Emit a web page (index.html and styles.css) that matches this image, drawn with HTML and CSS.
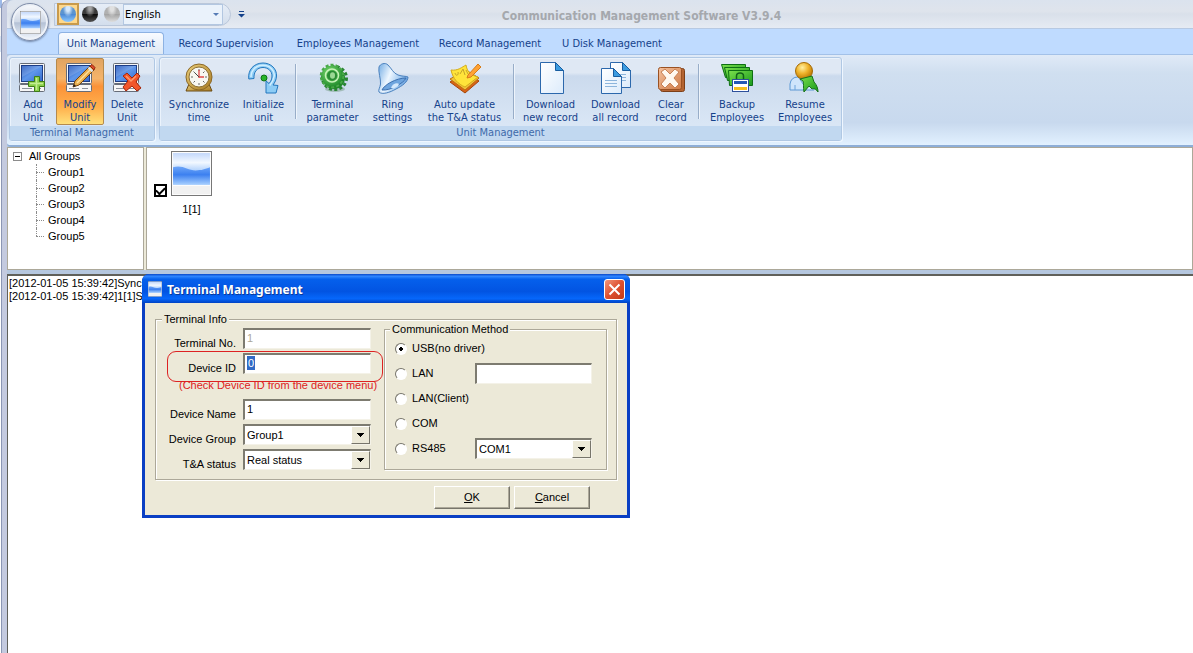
FILE: index.html
```html
<!DOCTYPE html>
<html lang="en">
<head>
<meta charset="utf-8">
<title>Communication Management Software V3.9.4</title>
<link rel="stylesheet" href="styles.css">
</head>
<body>
<svg width="0" height="0" class="defs" aria-hidden="true">
  <defs>
    <linearGradient id="sky" x1="0" y1="0" x2="0" y2="1"><stop offset="0" stop-color="#c3d8fb"/><stop offset=".3" stop-color="#f2f8ff"/><stop offset=".6" stop-color="#a8ccfc"/></linearGradient>
    <linearGradient id="sea" x1="0" y1="0" x2="0" y2="1"><stop offset="0" stop-color="#6ea6f8"/><stop offset=".45" stop-color="#3c80f0"/><stop offset="1" stop-color="#a8d0ff"/></linearGradient>
    <linearGradient id="screen" x1="0" y1="0" x2="1" y2="1"><stop offset="0" stop-color="#1c4fb8"/><stop offset=".5" stop-color="#5f97ea"/><stop offset="1" stop-color="#3268cc"/></linearGradient>
    <linearGradient id="gold" x1="0" y1="0" x2="1" y2="1"><stop offset="0" stop-color="#ecd07c"/><stop offset="1" stop-color="#a87a22"/></linearGradient>
    <linearGradient id="paper" x1="0" y1="0" x2="1" y2="1"><stop offset="0" stop-color="#ffffff"/><stop offset="1" stop-color="#dcebfb"/></linearGradient>
    <linearGradient id="bell" x1="0" y1=".3" x2="1" y2=".7"><stop offset="0" stop-color="#8fbdea"/><stop offset=".35" stop-color="#eef7ff"/><stop offset=".7" stop-color="#9cc6f0"/><stop offset="1" stop-color="#5a94d6"/></linearGradient>
    <linearGradient id="green" x1="0" y1="0" x2="1" y2="1"><stop offset="0" stop-color="#7be04c"/><stop offset="1" stop-color="#189a1c"/></linearGradient>
    <radialGradient id="gear" cx=".4" cy=".35" r=".7"><stop offset="0" stop-color="#7bdc70"/><stop offset="1" stop-color="#1f8a2a"/></radialGradient>
    <radialGradient id="head" cx=".4" cy=".3" r=".7"><stop offset="0" stop-color="#fff0a0"/><stop offset=".5" stop-color="#f0b42c"/><stop offset="1" stop-color="#b87400"/></radialGradient>
    <linearGradient id="copper" x1="0" y1="0" x2="1" y2="1"><stop offset="0" stop-color="#f4c09c"/><stop offset="1" stop-color="#d07c48"/></linearGradient>
    <symbol id="logo" viewBox="0 0 40 44">
      <rect x=".5" y=".5" width="39" height="43" fill="#fff" stroke="#777"/>
      <rect x="2" y="2" width="36" height="31" fill="url(#sky)"/>
      <path d="M2 16c9-3 14 3 22 3 6 0 9-1 14-3v17H2z" fill="url(#sea)"/>
      <rect x="2" y="34" width="36" height="8" fill="#f1f1f1"/>
    </symbol>
    <symbol id="pc" viewBox="0 0 32 32">
      <rect x="2.500" y="1.500" width="25" height="20" rx="1" fill="#f6f6f6" stroke="#666c77"/>
      <rect x="4.500" y="3.500" width="21" height="16" fill="url(#screen)" stroke="#1c3d86"/>
      <path d="M5 4h20L5 15z" fill="#fff" opacity=".16"/>
      <rect x="2.500" y="22.500" width="25" height="7" rx="1" fill="#f6f6f6" stroke="#666c77"/>
      <path d="M5 26.500h10M18 26.500h6" stroke="#8b919b"/>
    </symbol>
    <symbol id="doc" viewBox="0 0 24 32">
      <path d="M.5.5h15l8 8v23H.5z" fill="url(#paper)" stroke="#2c68ac"/>
      <path d="M15.500.5v8h8z" fill="#3b9be0" stroke="#175c9f"/>
    </symbol>
    <symbol id="sheet" viewBox="0 0 21 26">
      <path d="M.5.5h12l8 8v17H.5z" fill="url(#paper)" stroke="#2c68ac"/>
      <path d="M12.500.5v8h8z" fill="#3b9be0" stroke="#175c9f"/>
      <path d="M4 12.500h12M4 15.500h12M4 18.500h12" stroke="#8db5dc"/>
    </symbol>
  </defs>
</svg>

<div class="desktop-edge"></div>
<div class="window">
  <button class="app-button" type="button" aria-label="Application menu"><svg width="21" height="23"><use href="#logo"/></svg></button>

  <header class="titlebar">
    <div class="quick">
      <button class="orb-button orb-active" type="button" aria-label="Blue theme"><span class="orb orb-blue"></span></button>
      <button class="orb-button" type="button" aria-label="Black theme"><span class="orb orb-black"></span></button>
      <button class="orb-button" type="button" aria-label="Silver theme"><span class="orb orb-silver"></span></button>
      <span class="lang"><select aria-label="Language"><option>English</option></select></span>
    </div>
    <button class="quick-more" type="button" aria-label="More commands"><svg width="7" height="7" viewBox="0 0 7 7"><path d="M1 0h5v1H1zM0 3h7L3.500 6.500z" fill="#15428b"/></svg></button>
    <h1 class="app-title">Communication Management Software V3.9.4</h1>
  </header>

  <nav class="tabs">
    <button class="tab tab-active" type="button">Unit Management</button>
    <button class="tab" type="button">Record Supervision</button>
    <button class="tab tab-wide" type="button">Employees Management</button>
    <button class="tab" type="button">Record Management</button>
    <button class="tab" type="button">U Disk Management</button>
  </nav>

  <div class="ribbon">
    <section class="group">
      <div class="tools tools-units">
        <button class="tool w-s" type="button">
          <svg width="32" height="32" viewBox="0 0 32 32"><use href="#pc"/><path d="M17.500 14.500h5v5h5v5h-5v5h-5v-5h-6v-5h6z" fill="#8bcf4a" stroke="#3d7d16"/><path d="M19.500 16v12M13 21.500h13" stroke="#c3ee92" stroke-width="1.500"/></svg>
          Add<br>Unit</button>
        <button class="tool tool-active w-s" type="button">
          <svg width="32" height="32" viewBox="0 0 32 32"><use href="#pc"/><path d="M9 25l2-6L26 4l4 4-15 15z" fill="#e8b050" stroke="#75420c"/><path d="M13 21L27 7" stroke="#ffe09a" stroke-width="1.500"/><path d="M26 4l2-1.500 3 3L30 8z" fill="#e04a28" stroke="#8f2710"/><path d="M24.500 5.500l4 4" stroke="#dfe5ee" stroke-width="2"/><path d="M9 25l1-3 2 2z" fill="#222"/></svg>
          Modify<br>Unit</button>
        <button class="tool w-s" type="button">
          <svg width="32" height="32" viewBox="0 0 32 32"><use href="#pc"/><path d="M12 14l4-3 5 5 5-5 3 3-4 6 5 6-4 3-5-5-6 5-3-4 5-6z" fill="#f1562b" stroke="#a5250a"/><path d="M15 14l5 5 5-5" fill="none" stroke="#ff9a6c" stroke-width="1.500"/></svg>
          Delete<br>Unit</button>
      </div>
      <h2 class="group-name">Terminal Managment</h2>
    </section>

    <section class="group">
      <div class="tools">
        <button class="tool w-xl" type="button">
          <svg width="32" height="32" viewBox="0 0 32 32"><path d="M3 29l3-7h20l3 7z" fill="url(#gold)" stroke="#6b4b12"/><circle cx="16" cy="15" r="13" fill="url(#gold)" stroke="#8c6826"/><circle cx="16" cy="15" r="10" fill="#f8f7f2" stroke="#8d7238"/><path d="M16 7v2M16 21v2M8 15h2M22 15h2M10.500 9.500l1.500 1.500M21.500 9.500L20 11M10.500 20.500L12 19M21.500 20.500L20 19" stroke="#666"/><path d="M16 8v8M16 15h5" fill="none" stroke="#e04a4a" stroke-width="1.300"/><path d="M16 15l-4-4" stroke="#444"/></svg>
          Synchronize<br>time</button>
        <button class="tool w-m" type="button">
          <svg width="32" height="32" viewBox="0 0 32 32"><path d="M.8 17C-.5 8 6 1 15 1c8 0 14 6 13.500 13-.2 4-1.500 6-3.500 9l5 .5L28 31H18V19l3 2.500c2-2.500 3-4.500 3-7.500 0-5-4-8.500-9-8.500-6 0-9.500 4.500-9 11z" fill="#8dccf5" stroke="#2377bd"/><path d="M3 15C3 8 8 3.200 15 3.200S27 9 26.200 14s-2.500 7-4.500 9.500" fill="none" stroke="#d2efff" stroke-width="1.500"/><circle cx="16" cy="16" r="3" fill="#29b529" stroke="#0f7216"/></svg>
          Initialize<br>unit</button>
        <span class="divider"></span>
        <button class="tool w-l" type="button">
          <svg width="32" height="32" viewBox="0 0 32 32"><ellipse cx="18" cy="27" rx="10" ry="3" fill="#5c8a66" opacity=".4"/><ellipse cx="17.500" cy="16" rx="12" ry="11.500" fill="none" stroke="#2a8434" stroke-width="3" stroke-dasharray="3 2.200"/><circle cx="17" cy="16" r="11" fill="#22882a"/><circle cx="15" cy="14" r="11" fill="none" stroke="#49a848" stroke-width="2.500" stroke-dasharray="3 2"/><circle cx="15" cy="14" r="10.500" fill="url(#gear)"/><circle cx="15" cy="13.500" r="6.500" fill="none" stroke="#c6f2b8" stroke-width="1.500"/><circle cx="15" cy="13.500" r="5" fill="#2a8c34"/><ellipse cx="15.500" cy="13.500" rx="2.500" ry="3.200" fill="#9bd894"/></svg>
          Terminal<br>parameter</button>
        <button class="tool w-m" type="button">
          <svg width="32" height="32" viewBox="0 0 32 32"><path d="M2 30c-1-2 1-4 1.500-8C4 17 1 10 2 5c1-3 6-5 9-2 4 4 5 8 10 10 4 1.500 8 1 10 2 0 5-6 9-12 12-6 3.500-14 6-17 3z" fill="url(#bell)" stroke="#4a80bd"/><path d="M5 28c2-5 14-12 24-12-2 5-16 13-24 12z" fill="#6fa5de" stroke="#3a6fb0"/><path d="M14 26c1-4 6-6 8-4-1 3-5 5-8 4z" fill="#d5e9fc"/></svg>
          Ring<br>settings</button>
        <button class="tool w-xxl" type="button">
          <svg width="32" height="32" viewBox="0 0 32 32"><path d="M1 20l15 11 14-12-13-9z" fill="#d86318" stroke="#a54708"/><path d="M1 17l15 11 14-12-13-8z" fill="#f1c23a" stroke="#be720d"/><path d="M2 8c7 1 11-3 15-5 1 6 4 10 12 12L16 25C9 22 4 17 2 8z" fill="#ffe43a" stroke="#d4ac1c"/><path d="M6 11c1 4 4 2 3-1M11 12l3-5 2 6M17 8l2 4" fill="none" stroke="#c6a42a"/><path d="M19 13L29 2l3 3-10 10-4 1z" fill="#ffa234" stroke="#d77c17"/></svg>
          Auto update<br>the T&amp;A status</button>
        <span class="divider"></span>
        <button class="tool w-l" type="button">
          <svg width="32" height="32" viewBox="0 0 32 32"><use href="#doc" x="5" y="0" width="24" height="32"/></svg>
          Download<br>new record</button>
        <button class="tool w-l" type="button">
          <svg width="32" height="32" viewBox="0 0 32 32"><use href="#sheet" x="10" y="0" width="21" height="26"/><use href="#sheet" x="1" y="6" width="21" height="26"/></svg>
          Download<br>all record</button>
        <button class="tool w-s" type="button">
          <svg width="32" height="32" viewBox="0 0 32 32"><rect x="5.500" y="6.500" width="24" height="23" rx="2" fill="#b46432" stroke="#7d3f18"/><rect x="3.500" y="5.500" width="23" height="22" rx="2" fill="url(#copper)" stroke="#9a5122"/><path d="M6 10l4-3 5 5 5-5 4 3-5 6 5 6-4 4-5-5-5 5-4-4 5-6z" fill="#fff8ef" stroke="#c78155"/></svg>
          Clear<br>record</button>
        <span class="divider"></span>
        <button class="tool w-lx" type="button">
          <svg width="34" height="32" viewBox="0 0 34 32"><path d="M1.500 2.500h24v13h-20z" fill="url(#green)" stroke="#0d6e13"/><path d="M4.500 5.500h25v13h-22z" fill="url(#green)" stroke="#0d6e13"/><path d="M8.500 8.500h24v15h-23z" fill="url(#green)" stroke="#0d6e13"/><path d="M16.500 17v-3c0-4 7-4 7 0v3" fill="none" stroke="#116418" stroke-width="1.500"/><rect x="12.500" y="17.500" width="16" height="12" fill="#fff" stroke="#2d4f9b"/><path d="M14 19h13v3H14z" fill="#2458b5"/><path d="M14 25h13v3H14z" fill="#f4be20"/></svg>
          Backup<br>Employees</button>
        <button class="tool w-lx" type="button">
          <svg width="32" height="32" viewBox="0 0 32 32"><path d="M1 28V22q1-7 8-7h8q7 1 8 9v4z" fill="#cfe5fb" stroke="#5c98d4"/><path d="M6 28v-5M10 16l4 6 4-6" fill="none" stroke="#6ca4dc"/><circle cx="15" cy="9" r="8.500" fill="url(#head)" stroke="#a36a07"/><path d="M11 17l12-3 2 6c3 3 4 7 4 10-2-3-4-4-6-3l-3-3-5 6c-1-5 0-8-1-11z" fill="url(#green)" stroke="#18701a"/></svg>
          Resume<br>Employees</button>
      </div>
      <h2 class="group-name">Unit Management</h2>
    </section>
  </div>

  <main class="panes">
    <aside class="tree">
      <div class="tree-root"><button class="toggle" type="button" aria-label="Collapse"></button>All Groups</div>
      <ul>
        <li>Group1</li><li>Group2</li><li>Group3</li><li>Group4</li><li>Group5</li>
      </ul>
    </aside>
    <section class="devices">
      <label class="device">
        <input type="checkbox" checked>
        <span class="device-body"><svg width="41" height="45" viewBox="0 0 40 44" preserveAspectRatio="none"><use href="#logo"/></svg><span>1[1]</span></span>
      </label>
    </section>
  </main>

  <section class="log">
    <p>[2012-01-05 15:39:42]Synchronize</p>
    <p>[2012-01-05 15:39:42]1[1]Synchronize</p>
  </section>

  <div class="dialog" role="dialog" aria-labelledby="dialog-title">
    <div class="dialog-title">
      <svg width="14" height="16"><use href="#logo"/></svg>
      <h2 id="dialog-title">Terminal Management</h2>
      <button class="close" type="button" aria-label="Close"><svg width="13" height="13" viewBox="0 0 13 13"><path d="M1.500 1.500l10 10M11.500 1.500l-10 10" stroke="#fff" stroke-width="2"/></svg></button>
    </div>
    <form class="dialog-body">
      <fieldset class="info">
        <legend>Terminal Info</legend>
        <div class="columns">
          <div class="fields">
            <div class="field"><label for="no">Terminal No.</label><input id="no" type="text" value="1" disabled></div>
            <div class="field field-marked"><label for="dev">Device ID</label><span class="sunken"><input id="dev" type="text" value="0" size="1"></span></div>
            <p class="note">(Check Device ID from the device menu)</p>
            <div class="field"><label for="name">Device Name</label><input id="name" type="text" value="1"></div>
            <div class="field"><label for="grp">Device Group</label><span class="combo"><select id="grp"><option>Group1</option></select></span></div>
            <div class="field"><label for="sta">T&amp;A status</label><span class="combo"><select id="sta"><option>Real status</option></select></span></div>
          </div>
          <fieldset class="method">
            <legend>Communication Method</legend>
            <div class="choice"><label><input type="radio" name="m" checked>USB(no driver)</label></div>
            <div class="choice"><label><input type="radio" name="m">LAN</label><input type="text" aria-label="LAN address"></div>
            <div class="choice"><label><input type="radio" name="m">LAN(Client)</label></div>
            <div class="choice"><label><input type="radio" name="m">COM</label></div>
            <div class="choice"><label><input type="radio" name="m">RS485</label><span class="combo"><select aria-label="RS485 port"><option>COM1</option></select></span></div>
          </fieldset>
        </div>
      </fieldset>
      <div class="actions">
        <button class="push" type="button"><u>O</u>K</button>
        <button class="push" type="button"><u>C</u>ancel</button>
      </div>
    </form>
  </div>
</div>
</body>
</html>
```

FILE: styles.css
```css
* { box-sizing: border-box; }
body {
  margin: 0;
  min-height: 100vh;
  display: flex;
  overflow: hidden;
  font: 11px/13px "Liberation Sans", Arial, sans-serif;
  color: #000;
  background: #fff;
}
button, input, select { font: inherit; color: inherit; }
button { padding: 0; border: 0; background: none; }
h1, h2, p, ul { margin: 0; padding: 0; }
.defs { position: absolute; }

.desktop-edge {
  width: 2px;
  background: linear-gradient(#9db9e8 0 8px, #f4f4f4 8px 36px, #d8e4f4 36px 52px, #fff 52px);
}
.window {
  position: relative;
  flex: 1;
  min-width: 0;
  display: flex;
  flex-direction: column;
  border-left: 5px solid #c4cadf;
  border-top-left-radius: 8px;
  box-shadow: -1px 0 #8b96b4;
  background: #b5c7df;
}

/* Title bar */
.titlebar {
  display: flex;
  align-items: center;
  height: 29px;
  padding-left: 47px;
  background: linear-gradient(#dbe3ee, #dfe4ec 40%, #d9e0ea 50%, #e6ebf3);
  border-bottom: 1px solid #b7c9e2;
  border-top-left-radius: 6px;
}
.quick {
  display: flex;
  align-items: center;
  width: 177px;
  height: 23px;
  padding-left: 2px;
  background: linear-gradient(#e6edf7, #d3deec);
  border: 1px solid #bac7da;
  border-radius: 0 12px 12px 0;
}
.orb-button { display: grid; place-items: center; width: 22px; height: 22px; border: 1px solid transparent; }
.orb-active { border: 2px solid #c89a4c; background: #ffd88a; }
.orb { width: 16px; height: 16px; border-radius: 50%; }
.orb-blue { background: radial-gradient(ellipse at 50% 15%, #d4e8fc 0 15%, transparent 45%), linear-gradient(#5c94d0 50%, #4886d4 50%, #8fcaff); }
.orb-black { background: radial-gradient(ellipse at 50% 15%, #a4a4a4 0 10%, transparent 45%), linear-gradient(#3a3a3a 50%, #080808 50%, #555); }
.orb-silver { background: radial-gradient(ellipse at 50% 15%, #e0e0e0 0 15%, transparent 45%), linear-gradient(#b0b0b0 50%, #a0a0a0 50%, #dedede); }
.lang { display: grid; align-items: center; width: 100px; height: 21px; }
.lang::after {
  content: "";
  grid-area: 1 / 1;
  justify-self: end;
  margin-right: 4px;
  border: 3px solid transparent;
  border-top-color: #557bb5;
  border-bottom: 0;
  pointer-events: none;
}
.lang select {
  grid-area: 1 / 1;
  appearance: none;
  width: 100%;
  height: 21px;
  padding: 0 1px;
  border: 1px solid #b3c7e1;
  border-radius: 0;
  background: #eaf2fb;
  font-family: "DejaVu Sans Condensed", Tahoma, sans-serif;
}
.quick-more { width: 20px; display: grid; place-items: center; }
.app-title {
  flex: 1;
  padding: 3px 161px 0 0;
  text-align: center;
  white-space: nowrap;
  font: bold 12px/16px "DejaVu Sans Condensed", "Trebuchet MS", sans-serif;
  color: #a5a8ad;
}
.app-button {
  position: absolute;
  z-index: 2;
  left: 4px;
  top: 3px;
  width: 38px;
  height: 38px;
  display: grid;
  place-items: center;
  border-radius: 50%;
  border: 1px solid #7e8ca8;
  background: linear-gradient(#fbfcfe, #cfd8e6 50%, #b4c1d5 52%, #f2f7fd);
  box-shadow: inset 0 0 0 2px #eef2f8, 0 1px 2px #7086a8;
}

/* Tabs */
.tabs {
  display: flex;
  align-items: flex-end;
  gap: 2px;
  height: 25px;
  padding-left: 51px;
  background: #bfdbff;
}
.tab {
  flex: 0 0 120px;
  height: 22px;
  white-space: nowrap;
  font-family: "DejaVu Sans Condensed", Tahoma, sans-serif;
  color: #15428b;
}
.tab-wide { flex-basis: 140px; }
.tab-active {
  flex-basis: 106px;
  border: 1px solid #8db2e3;
  border-bottom: 0;
  border-radius: 4px 4px 0 0;
  background: linear-gradient(#f8fbff, #dfe9f5);
}

/* Ribbon */
.ribbon {
  display: flex;
  gap: 4px;
  padding: 2px 2px 4px;
  background: linear-gradient(#e0eaf7, #d0dff0 20%, #c8d9ee 75%, #e2f1ff);
  border-top: 1px solid #a3c1e8;
  border-bottom: 2px solid #8eaed7;
  border-radius: 4px 0 0 4px;
  overflow: hidden;
}
.group {
  flex: none;
  border: 1px solid #b0c8e4;
  border-radius: 3px;
  box-shadow: inset 1px 1px #ebf3fc, 1px 1px #eef6ff;
  background: linear-gradient(#dfe8f4 0 18%, #cbdaed 22%, #d9e6f5 80%);
}
.tools { display: flex; padding: 0 2px 1px; }
.tools-units { padding: 0 4px 1px 0; }
.tool {
  flex: none;
  display: flow-root;
  height: 67px;
  padding-top: 1px;
  border: 1px solid transparent;
  border-radius: 2px;
  white-space: nowrap;
  text-align: center;
  font-family: "DejaVu Sans Condensed", Tahoma, sans-serif;
  color: #15428b;
}
.tool svg { display: block; margin: 2px auto 4px; }
.w-s { width: 46px; }
.w-m { width: 55px; }
.w-l { width: 65px; }
.w-lx { width: 68px; }
.w-xl { width: 74px; }
.w-xxl { width: 89px; }
.tool-active {
  width: 48px;
  border-color: #b58a4c;
  background: linear-gradient(#e0a462, #f5b46a 30%, #fb9238 42%, #ffb14e 75%, #ffe07a);
}
.divider { flex: none; width: 1px; height: 55px; margin: 6px 4px 0; background: #98adc8; box-shadow: 1px 0 #eef4fb; }
.group-name {
  height: 14px;
  text-align: center;
  font: 11px/14px "DejaVu Sans Condensed", Tahoma, sans-serif;
  color: #3e6aaa;
  background: #c1d8f0;
}

/* Panes */
.panes { display: flex; gap: 2px; height: 123px; flex: none; margin-bottom: 4px; background: #ece9d8; }
.tree, .devices { border: 1px solid #aca899; background: #fff; }
.tree { flex: 0 0 137px; padding: 0 5px; line-height: 16px; }
.tree-root { display: flex; align-items: center; gap: 7px; }
.toggle {
  width: 9px;
  height: 9px;
  border: 1px solid #8c8c8c;
  background: linear-gradient(#000, #000) center / 5px 1px no-repeat #fff;
}
.tree ul { list-style: none; margin-left: 23px; }
.tree li { display: flex; align-items: center; gap: 4px; position: relative; }
.tree li::before { content: ""; width: 8px; border-top: 1px dotted #8c8c8c; }
.tree li::after { content: ""; position: absolute; left: 0; top: 0; height: 16px; border-left: 1px dotted #8c8c8c; }
.tree li:last-child::after { height: 8px; }
.devices { flex: 1; padding: 3px 7px; }
.device { display: inline-flex; align-items: center; gap: 4px; }
.device input {
  appearance: none;
  width: 13px;
  height: 13px;
  margin: 14px 0 0;
  border: 2px solid #000;
  background: #fff;
  display: grid;
  justify-items: center;
}
.device input:checked::before {
  content: "";
  width: 7px;
  height: 4px;
  margin-top: 1px;
  border: solid #000;
  border-width: 0 0 2px 2px;
  rotate: -45deg;
}
.device-body { display: grid; justify-items: center; gap: 7px; }
.log {
  flex: 1;
  padding: 1px;
  border: 1px solid #60605a;
  border-width: 2px 0 0 1px;
  background: #fff;
  white-space: nowrap;
}

/* Dialog */
.dialog {
  position: absolute;
  left: 135px;
  top: 274px;
  width: 488px;
  border: 3px solid #0a3fc4;
  border-top: 0;
  border-radius: 7px 7px 0 0;
  background: #0a3fc4;
}
.dialog-title {
  display: flex;
  align-items: center;
  gap: 5px;
  height: 29px;
  margin: 0 -3px;
  padding: 1px 5px 0 6px;
  border-radius: 7px 7px 0 0;
  background: linear-gradient(#0a48c8, #2f86ff 8%, #0560ec 18%, #0254e2 60%, #0667fb 85%, #0043c4);
}
.dialog-title h2 {
  flex: 1;
  padding-top: 2px;
  font: bold 12px/16px "Noto Sans", "Trebuchet MS", sans-serif;
  color: #fff;
  text-shadow: 1px 1px #0a3a9a;
}
.close {
  display: grid;
  place-items: center;
  width: 21px;
  height: 21px;
  border: 1px solid #fff;
  border-radius: 3px;
  background: linear-gradient(135deg, #f0967c, #de5030 50%, #c23a18);
}
.dialog-body { padding: 11px 10px 6px; background: #ece9d8; }
fieldset {
  min-width: 0;
  margin: 0;
  padding: 0;
  border: 1px solid #aca899;
  box-shadow: 1px 1px #fff, inset 1px 1px #fff;
}
legend { margin-left: 6px; padding: 0 2px; line-height: 10px; background: #ece9d8; }
.info { padding-bottom: 9px; }
.columns { display: flex; gap: 13px; padding-right: 9px; }
.fields { flex: 0 0 215px; display: grid; gap: 4px; align-content: start; padding-top: 4px; }
.field { position: relative; display: grid; grid-template-columns: 80px 128px; gap: 7px; height: 21px; }
.field label { align-self: end; text-align: right; line-height: 12px; }
.field-marked::after {
  content: "";
  position: absolute;
  left: 11px;
  top: -2px;
  width: 214px;
  height: 29px;
  border: 1px solid #d22;
  border-radius: 9px;
  pointer-events: none;
}
.note { height: 17px; padding-left: 23px; line-height: 15px; color: #d22; white-space: nowrap; }
input[type="text"], .sunken, .combo {
  display: grid;
  min-width: 0;
  width: 100%;
  height: 21px;
  border: solid;
  border-width: 2px 1px 1px 2px;
  border-color: #7d7b70 #f4f2e8 #f4f2e8 #7d7b70;
  border-radius: 0;
  background: #fff;
  padding: 0 2px 2px;
}
input:disabled { color: #aca899; }
.sunken { padding: 1px 2px; justify-items: start; }
.sunken input[type="text"] { width: 8px; height: 14px; border: 0; padding: 0 1px; background: #316ac5; color: #fff; }
.combo { padding: 0; }
.combo select {
  grid-area: 1 / 1;
  appearance: none;
  width: 100%;
  border: 0;
  padding: 0 2px;
  background: none;
}
.combo::after {
  content: "";
  grid-area: 1 / 1;
  justify-self: end;
  width: 17px;
  border: 1px solid;
  border-color: #fff #77756b #77756b #fff;
  background:
    linear-gradient(#000, #000) 5px 6px / 7px 1px no-repeat,
    linear-gradient(#000, #000) 6px 7px / 5px 1px no-repeat,
    linear-gradient(#000, #000) 7px 8px / 3px 1px no-repeat,
    linear-gradient(#000, #000) 8px 9px / 1px 1px no-repeat,
    #ece9d8;
  pointer-events: none;
}
.columns { gap: 7px; }
.method { flex: 1; padding: 2px 14px 5px 10px; }
.method legend { margin-left: -5px; }
.choice { display: grid; grid-template-columns: 1fr 117px; align-items: center; height: 25px; }
.choice label { display: flex; align-items: center; gap: 5px; white-space: nowrap; }
input[type="radio"] {
  appearance: none;
  width: 12px;
  height: 12px;
  margin: 0;
  border: 1px solid;
  border-color: #77756b #fff #fff #77756b;
  border-radius: 50%;
  background: #fff;
}
input[type="radio"]:checked { background: radial-gradient(circle, #000 0 2px, #fff 2px); }
.actions { display: flex; justify-content: flex-end; gap: 4px; padding: 6px 27px 0 0; }
.push {
  width: 76px;
  height: 23px;
  border: 1px solid;
  border-color: #fff #77756b #77756b #fff;
  box-shadow: inset -1px -1px #aca899;
  background: #ece9d8;
}
```
